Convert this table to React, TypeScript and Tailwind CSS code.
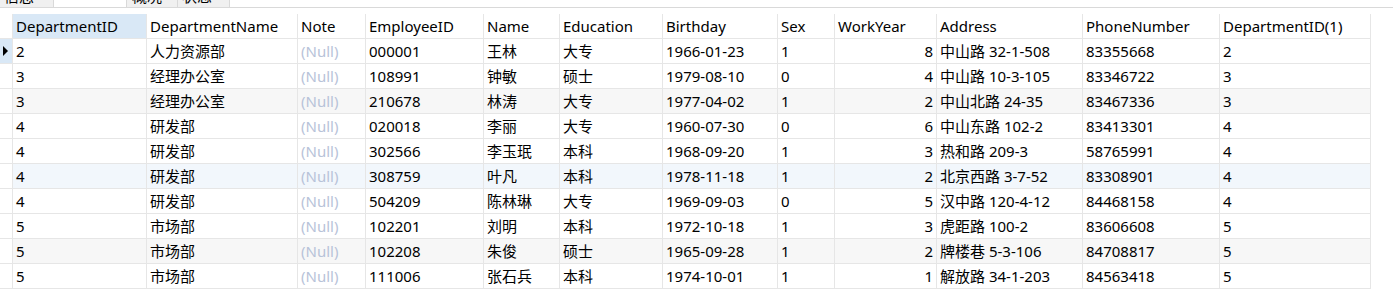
import React from 'react';

const cols = [
  { key: 'DepartmentID', w: 'w-[134px]' },
  { key: 'DepartmentName', w: 'w-[151px]' },
  { key: 'Note', w: 'w-[68px]' },
  { key: 'EmployeeID', w: 'w-[118px]' },
  { key: 'Name', w: 'w-[76px]' },
  { key: 'Education', w: 'w-[103px]' },
  { key: 'Birthday', w: 'w-[115px]' },
  { key: 'Sex', w: 'w-[57px]' },
  { key: 'WorkYear', w: 'w-[102px]' },
  { key: 'Address', w: 'w-[146px]' },
  { key: 'PhoneNumber', w: 'w-[137px]' },
  { key: 'DepartmentID(1)', w: 'w-[151px]' },
];

const rows = [
  ['2', '人力资源部', null, '000001', '王林', '大专', '1966-01-23', '1', '8', '中山路 32-1-508', '83355668', '2'],
  ['3', '经理办公室', null, '108991', '钟敏', '硕士', '1979-08-10', '0', '4', '中山路 10-3-105', '83346722', '3'],
  ['3', '经理办公室', null, '210678', '林涛', '大专', '1977-04-02', '1', '2', '中山北路 24-35', '83467336', '3'],
  ['4', '研发部', null, '020018', '李丽', '大专', '1960-07-30', '0', '6', '中山东路 102-2', '83413301', '4'],
  ['4', '研发部', null, '302566', '李玉珉', '本科', '1968-09-20', '1', '3', '热和路 209-3', '58765991', '4'],
  ['4', '研发部', null, '308759', '叶凡', '本科', '1978-11-18', '1', '2', '北京西路 3-7-52', '83308901', '4'],
  ['4', '研发部', null, '504209', '陈林琳', '大专', '1969-09-03', '0', '5', '汉中路 120-4-12', '84468158', '4'],
  ['5', '市场部', null, '102201', '刘明', '本科', '1972-10-18', '1', '3', '虎距路 100-2', '83606608', '5'],
  ['5', '市场部', null, '102208', '朱俊', '硕士', '1965-09-28', '1', '2', '牌楼巷 5-3-106', '84708817', '5'],
  ['5', '市场部', null, '111006', '张石兵', '本科', '1974-10-01', '1', '1', '解放路 34-1-203', '84563418', '5'],
];

// every third row is shaded, the sixth one is under the mouse
const rowBg = ['bg-white', 'bg-white', 'bg-[#f7f7f7]', 'bg-white', 'bg-white', 'bg-[#f2f7fc]', 'bg-white', 'bg-white', 'bg-[#f7f7f7]', 'bg-white'];

function Tab(props: { label: string; w: string }) {
  return (
    <div className={`${props.w} h-[8px] bg-[#f0f0f0] border-r border-b border-[#d9d9d9] overflow-hidden`}>
      <div className="-mt-[11px] pl-[4px] leading-[15px] text-[15px] text-black">{props.label}</div>
    </div>
  );
}

export default function App() {
  return (
    <main
      className="w-[1393px] h-[304px] bg-white text-black overflow-hidden"
      style={{ fontFamily: '"Noto Sans", "Noto Sans CJK SC", sans-serif' }}
    >
      {/* result tabs, clipped at the top */}
      <div className="flex h-[8px]">
        <Tab label="信息" w="w-[54px]" />
        <div className="w-[72px] h-[8px] border-b border-[#d9d9d9]" />
        <div className="w-[52px] h-[8px] bg-[#f0f0f0] border-l border-r border-b border-[#d9d9d9] overflow-hidden">
          <div className="-mt-[11px] pl-[5px] leading-[15px] text-[15px]">概况</div>
        </div>
        <Tab label="状态" w="w-[52px]" />
        <div className="flex-1 h-[8px] border-b border-[#d9d9d9]" />
      </div>

      <div className="mt-[6px] w-[1371px] text-[15px] leading-none">
        {/* header */}
        <div className="flex h-[25px]">
          <div className="w-[13px] border-r border-b border-[#e6e6e6] bg-white" />
          {cols.map((c, i) => (
            <div
              key={c.key}
              className={`${c.w} shrink-0 flex items-center px-[3px] border-r border-b border-[#e6e6e6] whitespace-nowrap overflow-hidden ${
                i === 0 ? 'bg-[#d9e8f6]' : 'bg-white'
              }`}
            >
              {c.key}
            </div>
          ))}
        </div>

        {rows.map((r, ri) => (
          <div key={ri} className={`flex h-[25px] ${rowBg[ri]}`}>
            <div
              className={`w-[13px] shrink-0 flex items-center border-r border-b border-[#e6e6e6] ${
                ri === 0 ? 'bg-[#d9e8f6]' : 'bg-white'
              }`}
            >
              {ri === 0 && (
                <svg width="6" height="10" viewBox="0 0 6 10" className="ml-[3px]">
                  <path d="M0 0 L5 5 L0 10 Z" fill="#000" />
                </svg>
              )}
            </div>
            {r.map((v, ci) => (
              <div
                key={ci}
                className={`${cols[ci].w} shrink-0 flex items-center px-[3px] border-r border-b border-[#e6e6e6] whitespace-nowrap overflow-hidden ${
                  ci === 8 ? 'justify-end' : ''
                }`}
              >
                {v === null ? <span className="text-[#b8c3d9]">(Null)</span> : v}
              </div>
            ))}
          </div>
        ))}
      </div>
    </main>
  );
}
